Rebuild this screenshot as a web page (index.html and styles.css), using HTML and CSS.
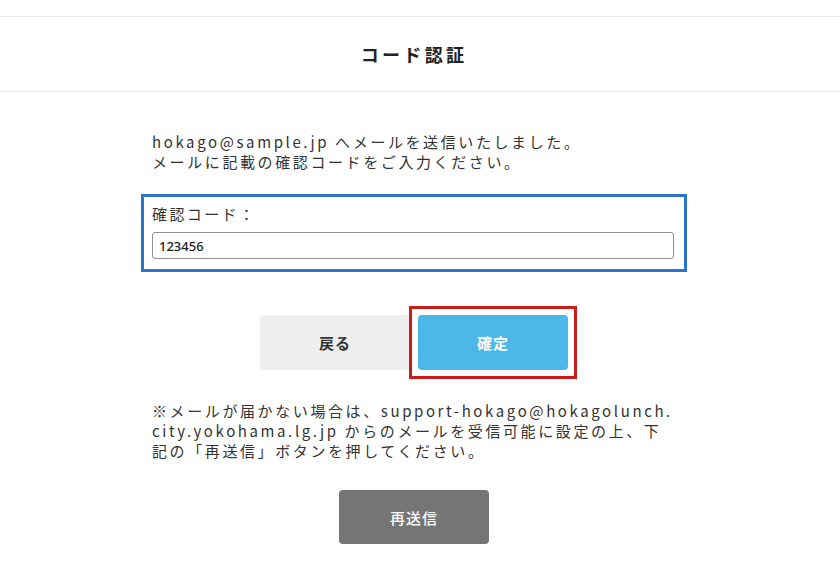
FILE: index.html
```html
<!DOCTYPE html>
<html lang="ja">
<head>
    <meta charset="UTF-8">
    <meta name="viewport" content="width=device-width, initial-scale=1.0">
    <title>コード認証</title>
    <link rel="stylesheet" href="styles.css">
</head>
<body>
    <!-- Page header -->
    <header class="page-header">
        <h1>コード認証</h1>
    </header>

    <main class="page">
        <div class="column">
            <p class="intro">hokago@sample.jp へメールを送信いたしました。<br>メールに記載の確認コードをご入力ください。</p>

            <div class="code-box">
                <label for="code">確認コード：</label>
                <input type="text" id="code" value="123456">
            </div>

            <div class="actions">
                <button class="btn btn-back">戻る</button>
                <button class="btn btn-confirm">確定</button>
            </div>

            <p class="note">※メールが届かない場合は、support-hokago@hokagolunch.<br>city.yokohama.lg.jp からのメールを受信可能に設定の上、下<br>記の「再送信」ボタンを押してください。</p>

            <div class="resend-row">
                <button class="btn btn-resend">再送信</button>
            </div>
        </div>
    </main>
</body>
</html>
```

FILE: styles.css
```css
body {
    font-family: "Noto Sans CJK JP", "Noto Sans", sans-serif;
    margin: 0;
    padding: 0;
    background-color: #ffffff;
    color: #333333;
}
.page-header {
    margin-top: 16px;
    height: 74px;
    border-top: 1px solid #e8e8e8;
    border-bottom: 1px solid #e8e8e8;
    display: flex;
    align-items: center;
    justify-content: center;
    padding-right: 12px;
}
.page-header h1 {
    margin: 0;
    font-size: 18px;
    font-weight: bold;
    letter-spacing: 3.3px;
    color: #222222;
}
.page {
    width: 828px;
    padding-top: 40px;
}
.column {
    width: 546px;
    margin: 0 auto;
}
.intro, .note {
    margin: 0;
    padding: 0 0 0 11px;
    font-size: 15px;
    line-height: 20px;
    letter-spacing: 2.6px;
    color: #333333;
}
.code-box {
    margin-top: 22px;
    border: 3px solid #2a74cc;
    padding: 7px 10px 10px 8px;
}
.code-box label {
    display: block;
    font-size: 15px;
    line-height: 20px;
    letter-spacing: 2.4px;
    margin-bottom: 8px;
}
.code-box input {
    display: block;
    box-sizing: border-box;
    width: 100%;
    height: 27px;
    padding: 0 6px;
    border: 1px solid #8f8f8f;
    border-radius: 3px;
    font-family: "Noto Sans", sans-serif;
    font-size: 13px;
    font-weight: 500;
    color: #222222;
}
.actions {
    margin-top: 43px;
    display: flex;
    justify-content: center;
    gap: 8px;
}
.btn {
    width: 150px;
    height: 55px;
    border: none;
    border-radius: 4px;
    font-family: "Noto Sans CJK JP", sans-serif;
    font-size: 15px;
    letter-spacing: 1px;
    cursor: pointer;
}
.btn-back {
    background-color: #eeeeee;
    color: #333333;
    font-weight: bold;
}
.btn-confirm {
    position: relative;
    background-color: #4cb8e7;
    color: #ffffff;
    font-weight: bold;
}
/* red highlight frame drawn over the confirm button */
.btn-confirm::after {
    content: "";
    position: absolute;
    top: -9px;
    left: -9px;
    right: -9px;
    bottom: -9px;
    border: 3px solid #cc1b1b;
}
.note {
    margin-top: 31px;
}
.resend-row {
    margin-top: 29px;
    display: flex;
    justify-content: center;
}
.btn-resend {
    height: 54px;
    background-color: #757575;
    color: #ffffff;
    font-weight: 500;
}
```
